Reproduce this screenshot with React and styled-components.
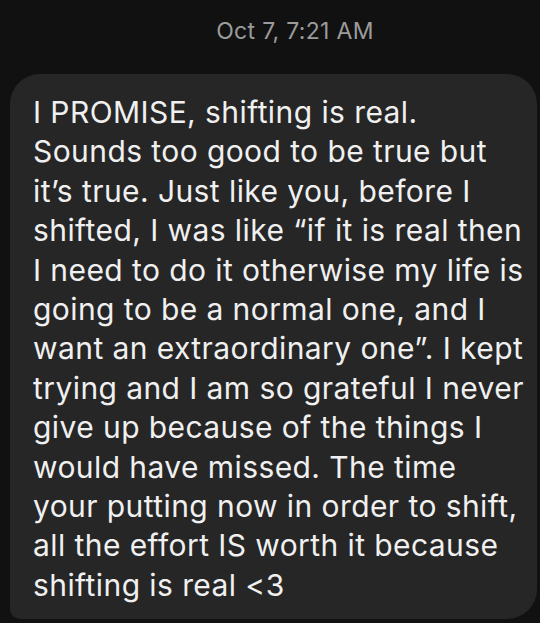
import React from "react";
import styled, { createGlobalStyle } from "styled-components";

const Global = createGlobalStyle`
  html, body { margin: 0; padding: 0; background: #111111; }
  body { font-family: Inter, "Noto Sans", "Liberation Sans", sans-serif; -webkit-font-smoothing: antialiased; }
`;

const Screen = styled.div`
  width: 540px;
  height: 623px;
  overflow: hidden;
  background: #111111;
  display: flex;
  flex-direction: column;
`;

const Timestamp = styled.div`
  padding: 17px 0 0 50px;
  height: 74px;
  flex-shrink: 0;
  box-sizing: border-box;
  text-align: center;
  color: #9b9b9b;
  font-size: 23px;
  line-height: 28px;
  letter-spacing: 0.3px;
`;

const Bubble = styled.div`
  margin-left: 10px;
  width: 527px;
  flex-shrink: 0;
  box-sizing: border-box;
  background: #262626;
  border-radius: 30px 30px 30px 10px;
  padding: 19px 0 14px 23px;
  color: #f0f0f0;
  font-size: 30px;
  line-height: 39.4px;
  letter-spacing: 0.42px;
`;

const Line = styled.div`
  white-space: nowrap;
`;

const lines = [
  "I PROMISE, shifting is real.",
  "Sounds too good to be true but",
  "it\u2019s true. Just like you, before I",
  "shifted, I was like \u201cif it is real then",
  "I need to do it otherwise my life is",
  "going to be a normal one, and I",
  "want an extraordinary one\u201d. I kept",
  "trying and I am so grateful I never",
  "give up because of the things I",
  "would have missed. The time",
  "your putting now in order to shift,",
  "all the effort IS worth it because",
  "shifting is real <3",
];

export default function App() {
  return (
    <>
      <Global />
      <Screen>
        <Timestamp>Oct 7, 7:21 AM</Timestamp>
        <Bubble>
          {lines.map((l, i) => (
            <Line key={i}>{l}</Line>
          ))}
        </Bubble>
      </Screen>
    </>
  );
}
